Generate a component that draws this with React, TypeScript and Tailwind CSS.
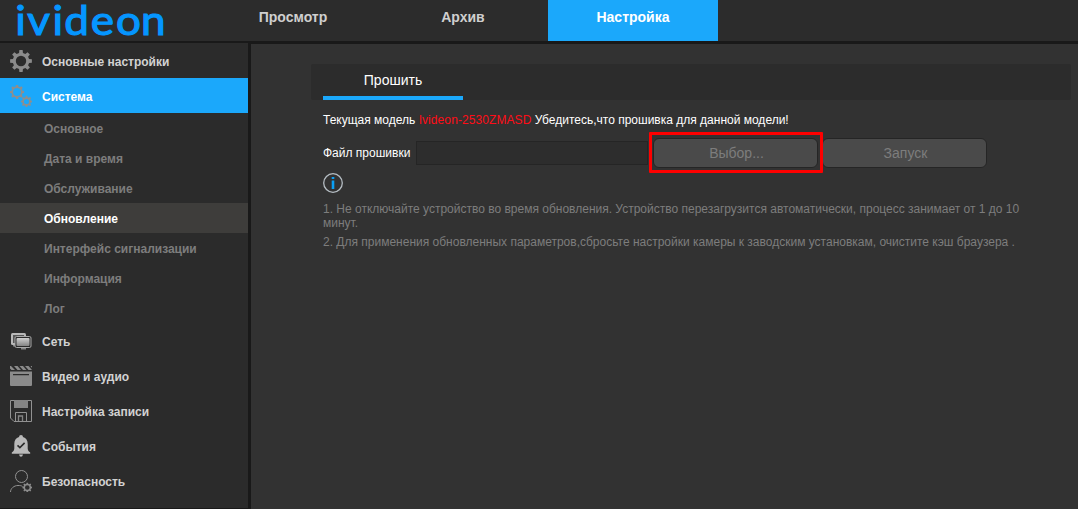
import React from "react";

function gearPath(cx: number, cy: number, outer: number, inner: number, teeth: number) {
  const step = (Math.PI * 2) / teeth;
  const points: string[] = [];
  for (let i = 0; i < teeth; i++) {
    const a = i * step - Math.PI / 2;
    const corners: [number, number][] = [
      [inner, -0.3],
      [outer, -0.19],
      [outer, 0.19],
      [inner, 0.3],
    ];
    for (const [r, t] of corners) {
      points.push(`${(cx + r * Math.cos(a + t * step)).toFixed(2)} ${(cy + r * Math.sin(a + t * step)).toFixed(2)}`);
    }
  }
  return `M${points.join("L")}Z`;
}

function Gear({ cx, cy, outer, inner, hole, color }: { cx: number; cy: number; outer: number; inner: number; hole: number; color: string }) {
  return (
    <path
      fill={color}
      fillRule="evenodd"
      d={`${gearPath(cx, cy, outer, inner, 8)}M${cx - hole} ${cy}a${hole} ${hole} 0 1 0 ${hole * 2} 0a${hole} ${hole} 0 1 0 ${-hole * 2} 0Z`}
    />
  );
}

const icons: Record<string, React.ReactNode> = {
  gear: <Gear cx={11} cy={11} outer={11} inner={8.3} hole={5.2} color="#8b8b8b" />,
  gears: (
    <>
      <Gear cx={7} cy={7} outer={7.2} inner={5.6} hole={3.9} color="#8e8e8e" />
      <Gear cx={16.5} cy={16.5} outer={5.7} inner={4.4} hole={2.6} color="#8e8e8e" />
    </>
  ),
  network: (
    <>
      <defs>
        <linearGradient id="screen" x1="0" y1="0" x2="0" y2="1">
          <stop offset="0" stopColor="#cfcfcf" />
          <stop offset="1" stopColor="#858585" />
        </linearGradient>
      </defs>
      <rect x="1" y="3" width="15" height="12" rx="1.5" fill="#b8b8b8" />
      <path d="M3 5h11v2H6v6H3z" fill="#555" />
      <path d="M3 15h3v1.500H3z" fill="#888" />
      <rect x="5" y="6.500" width="16" height="11" rx="1.5" fill="#2b2b2b" stroke="#a8a8a8" />
      <rect x="6.500" y="8" width="13" height="8" rx="1" fill="url(#screen)" />
      <path d="M11 18h5v1.500h-5z" fill="#888" />
    </>
  ),
  video: (
    <>
      <path fill="#8b8b8b" d="M0 1h1l4 4H1.500L0 3.500zM4 1h3.500l3.500 4H7.500zM9.500 1H13l3.500 4H13zM15 1h3.500L22 5h-3.500zM20.500 1H22v1.800z" />
      <path fill="#8b8b8b" fillRule="evenodd" d="M0 6.500h22V20q0 1-1 1H1q-1 0-1-1zM3 9v1.200h16V9z" />
    </>
  ),
  disk: (
    <>
      <path d="M.5.5h21v21H4L.5 18z" fill="none" stroke="#929292" />
      <path fill="#858585" d="M4 0h14v8H4z" />
      <path d="M5.5 21v-8.5h11V21" fill="none" stroke="#929292" />
      <path d="M8.5 21v-5h4v5" fill="none" stroke="#858585" strokeWidth="1.3" />
    </>
  ),
  bell: (
    <>
      <path fill="#b9b9b9" d="M11 0q2 0 2 2c3.200 1 4.700 3.600 4.700 7v4.500c0 2 1.200 3 2.500 4v1.200H1.800v-1.200c1.300-1 2.500-2 2.500-4V9C4.300 5.600 5.800 3 9 2q0-2 2-2zM9 19.500h4Q12.500 21.700 11 21.700T9 19.500z" />
      <path d="M7.500 10.300l2.400 2.300 4.700-4.700" fill="none" stroke="#2b2b2b" strokeWidth="1.6" />
    </>
  ),
  security: (
    <>
      <circle cx="11.500" cy="6.500" r="6" fill="none" stroke="#929292" />
      <path d="M.5 22c0-3.500 3.500-6.500 7.500-6.500 2 0 3.200 0 4.500 1" fill="none" stroke="#929292" />
      <Gear cx={17.3} cy={17.5} outer={4.9} inner={3.8} hole={2.3} color="#8b8b8b" />
    </>
  ),
};

type Section = { label: string; icon: string; active?: boolean; children?: string[] };

const sections: Section[] = [
  { label: "Основные настройки", icon: "gear" },
  {
    label: "Система",
    icon: "gears",
    active: true,
    children: ["Основное", "Дата и время", "Обслуживание", "Обновление", "Интерфейс сигнализации", "Информация", "Лог"],
  },
  { label: "Сеть", icon: "network" },
  { label: "Видео и аудио", icon: "video" },
  { label: "Настройка записи", icon: "disk" },
  { label: "События", icon: "bell" },
  { label: "Безопасность", icon: "security" },
];

function Sidebar() {
  return (
    <nav className="h-[465px] w-[248px] shrink-0 bg-[#2b2b2b] font-bold">
      {sections.map((section) => (
        <div key={section.label}>
          <div className={section.active ? "flex h-[35px] items-center bg-[#1ba8fb] pl-2.5 text-white" : "flex h-[35px] items-center pl-2.5 text-[#d2d2d2]"}>
            <svg className="h-[22px] w-[22px] shrink-0" viewBox="0 0 22 22">
              {icons[section.icon]}
            </svg>
            <span className="ml-2.5 pt-[3px] leading-[14px]">{section.label}</span>
          </div>
          {section.children?.map((item) => (
            <div
              key={item}
              className={
                item === "Обновление"
                  ? "flex h-[30px] items-center bg-[#3e3d3b] pl-11 pt-px text-white"
                  : "flex h-[30px] items-center pl-11 pt-px text-[#7d7d7d]"
              }
            >
              {item}
            </div>
          ))}
        </div>
      ))}
    </nav>
  );
}

export default function App() {
  return (
    <div className="flex h-[509px] w-[1078px] flex-col overflow-hidden bg-[#191919] font-['Liberation_Sans',Arial,sans-serif] text-[12px] leading-[14px]">
      <header className="flex h-[41px] shrink-0 bg-[#2c2c2c] text-[14px] font-bold text-[#cfcfcf]">
        <svg className="h-[41px] w-[208px] shrink-0 overflow-visible">
          <text
            x="13.800 24.800 47.800 58.300 82.400 105.500 128.200"
            y="34.500"
            transform="scale(1.1 1)"
            fontFamily="Lato, sans-serif"
            fontSize="40"
            fontWeight="400"
            fill="#0596ff"
            stroke="#0596ff"
            strokeWidth="1.100"
          >
            ivideon
          </text>
        </svg>
        <div className="flex w-[170px] justify-center pt-[9px] leading-4">Просмотр</div>
        <div className="flex w-[170px] justify-center pt-[9px] leading-4">Архив</div>
        <div className="flex w-[170px] justify-center bg-[#1ba8fb] pt-[9px] leading-4 text-white">Настройка</div>
      </header>
      <div className="flex min-h-0 flex-1 pt-0.5">
        <Sidebar />
        <main className="ml-[3px] mt-px flex-1 bg-[#323232] pl-[60px] pr-[7px] pt-5">
          <div className="h-9 rounded-[2px] bg-[#2c2c2c] pl-3">
            <div className="h-9 w-[140px] border-b-4 border-[#1ba8fb] pt-2 text-center text-[14px] leading-4 text-white">Прошить</div>
          </div>
          <div className="pl-3 text-white">
            <p className="mt-[13px]">
              Текущая модель <span className="tracking-[0.08px] text-[#ff0d17]">Ivideon-2530ZMASD</span> Убедитесь,что прошивка для данной модели!
            </p>
            <div className="mt-[5px] flex h-[41px] items-center">
              <label className="w-[93px] shrink-0">Файл прошивки</label>
              <input className="h-6 w-[232px] shrink-0 border border-[#252525] bg-[#2d2d2d] outline-none" />
              <div className="z-10 ml-px flex h-[41px] w-[174px] shrink-0 items-center rounded-[1px] border-[3px] border-[#fe0000] pl-px">
                <button className="h-[30px] w-[165px] shrink-0 rounded-[6px] border border-[#252525] bg-[#4a4a4a] pl-0.5 text-[14px] text-[#7d7d7d]">Выбор...</button>
              </div>
              <button className="-ml-px h-[30px] w-[165px] shrink-0 rounded-[6px] border border-[#252525] bg-[#4a4a4a] pl-0.5 text-[14px] text-[#7d7d7d]">Запуск</button>
            </div>
            <svg className="h-5 w-5" viewBox="0 0 20 20">
              <circle cx="10" cy="10" r="9.300" fill="none" stroke="#b5bdc3" strokeWidth="1.300" />
              <path d="M8.700 4h2.600v2H8.700zM8.700 7.500h2.600V16H8.700z" fill="#0aa0f5" />
            </svg>
            <div className="mt-[9px] w-[705px] text-[#7d7d7d]">
              <p>1. Не отключайте устройство во время обновления. Устройство перезагрузится автоматически, процесс занимает от 1 до 10 минут.</p>
              <p className="mt-[5px]">2. Для применения обновленных параметров,сбросьте настройки камеры к заводским установкам, очистите кэш браузера .</p>
            </div>
          </div>
        </main>
      </div>
    </div>
  );
}
